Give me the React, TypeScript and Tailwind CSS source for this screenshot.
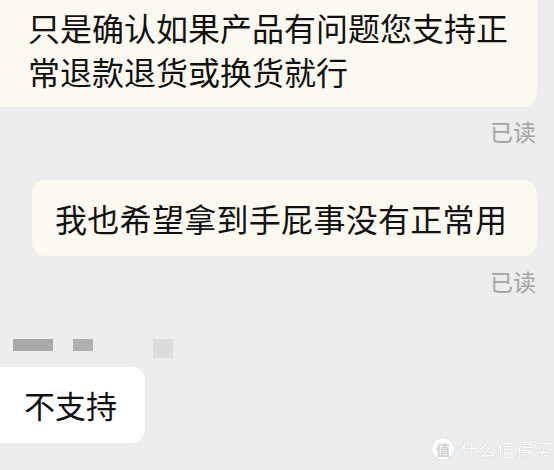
import React from "react";

const font = { fontFamily: '"Noto Sans CJK SC", "Noto Sans", sans-serif' };

export default function App() {
  return (
    <div
      className="relative w-[554px] h-[470px] overflow-hidden bg-[#ededed] flex flex-col"
      style={font}
    >
      {/* bubble 1 (cut off at top/left) */}
      <div className="-mt-[20px] -ml-[20px] mr-[17px] rounded-[14px] bg-[#fcf9f0] pl-[48px] pr-[26px] pt-[25px] pb-[14px] text-[32px] leading-[44px] text-[#111111]">
        只是确认如果产品有问题您支持正常退款退货或换货就行
      </div>
      <div className="mt-[12px] mr-[18px] text-right text-[23px] leading-[24px] text-[#a3a3a3]">
        已读
      </div>

      {/* bubble 2 */}
      <div className="mt-[37px] ml-[32px] mr-[17px] h-[76px] rounded-[14px] bg-[#fcf9f0] flex items-center pl-[23px] text-[32px] tracking-[0.3px] whitespace-nowrap text-[#111111]">
        我也希望拿到手屁事没有正常用
      </div>
      <div className="mt-[13px] mr-[18px] text-right text-[23px] leading-[24px] text-[#a3a3a3]">
        已读
      </div>

      {/* blurred sender name */}
      <div className="mt-[46px] flex items-start">
        <div className="ml-[13px] w-[40px] h-[12px] bg-[#a8a8a8] blur-[0.6px]" />
        <div className="ml-[20px] w-[20px] h-[12px] bg-[#b0b0b0] blur-[0.6px]" />
        <div className="ml-[60px] w-[20px] h-[19px] bg-[#dcdcdc] blur-[0.6px]" />
      </div>

      {/* bubble 3 */}
      <div className="mt-[9px] -ml-[14px] w-[159px] h-[76px] rounded-[14px] bg-white flex items-center pl-[38px] text-[31px] text-[#111111]">
        不支持
      </div>

      {/* watermark */}
      <div className="absolute left-[432px] top-[438px] flex items-center gap-[6px] text-white [text-shadow:0_0_1px_rgba(0,0,0,0.25)]">
        <div className="w-[22px] h-[22px] rounded-full bg-white flex items-center justify-center text-[14px] text-[#d0d0d0] font-bold [text-shadow:none] shadow-[0_0_1px_rgba(0,0,0,0.3)]">
          值
        </div>
        <div className="text-[18px] leading-[20px] tracking-[0.5px]">什么值得买</div>
      </div>
    </div>
  );
}
